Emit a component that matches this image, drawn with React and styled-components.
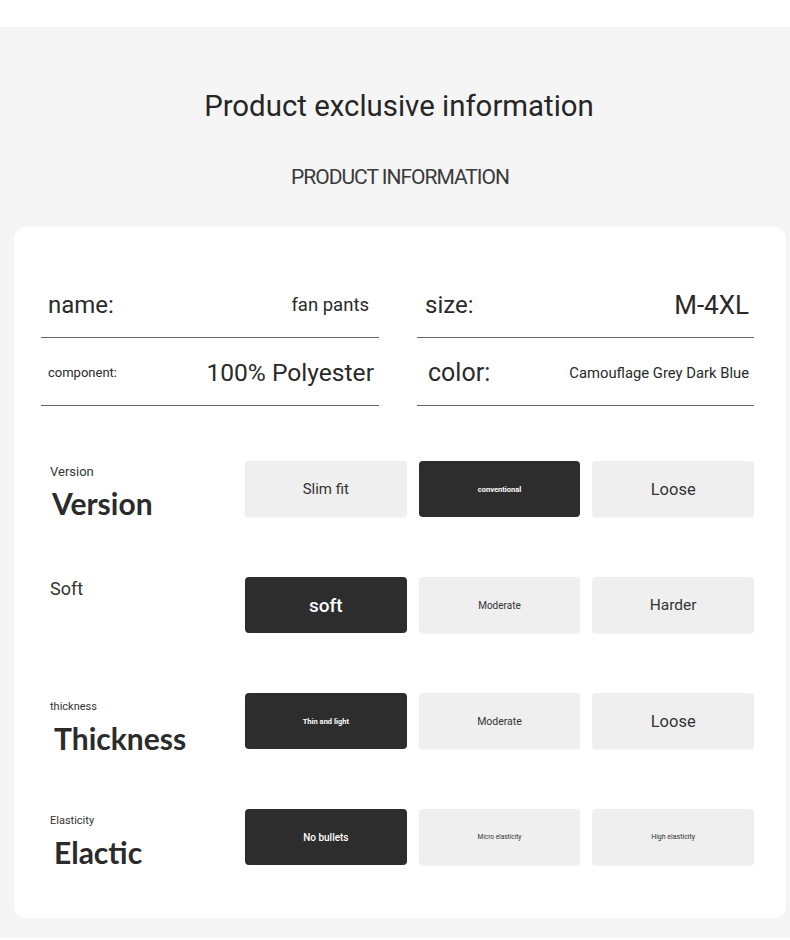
import React from 'react';
import styled, {createGlobalStyle} from 'styled-components';

const GlobalStyle = createGlobalStyle`
  body {
    margin: 0;
    background: #fff;
    font-family: Roboto, "Liberation Sans", sans-serif;
    color: #2b2b2b;
  }
`;

const Page = styled.div`
  margin-top: 27px;
  background: #f5f5f5;
  padding: 0 4px 20px 14px;
`;

const Header = styled.div`
  height: 200px;
  display: flex;
  flex-direction: column;
  align-items: center;
  padding-top: 62px;
  box-sizing: border-box;
`;

const Title = styled.h1`
  margin: 0;
  font-size: 29.4px;
  line-height: 34px;
  font-weight: 400;
  color: #262626;
  padding-right: 2px;
`;

const SubTitle = styled.h2`
  margin: 42px 0 0;
  font-size: 21px;
  line-height: 24px;
  font-weight: 400;
  letter-spacing: -1px;
  color: #3a3a3a;
`;

const Card = styled.div`
  background: #fff;
  border-radius: 12px;
  padding: 43px 32px 53px 27px;
`;

const InfoGrid = styled.div`
  display: grid;
  grid-template-columns: 338px 1fr;
  column-gap: 38px;
`;

const InfoRow = styled.div`
  height: 68px;
  display: flex;
  align-items: center;
  justify-content: space-between;
  padding: 2px ${props => props.right}px 0 ${props => props.left}px;
  border-bottom: 1.5px solid #666;
  box-sizing: border-box;
`;

const InfoKey = styled.span`
  font-size: ${props => props.size}px;
  color: #2a2a2a;
`;

const InfoValue = styled.span`
  font-size: ${props => props.size}px;
  color: #2a2a2a;
`;

const AttrGrid = styled.div`
  margin-top: 55px;
  display: grid;
  grid-template-columns: 192px repeat(3, 1fr);
  column-gap: 12px;
  row-gap: 60px;
  grid-auto-rows: 56px;
`;

const LabelCell = styled.div`
  padding: ${props => props.top}px 0 0 9px;
`;

const SmallLabel = styled.div`
  font-size: ${props => props.size}px;
  line-height: ${props => props.size + 3}px;
  color: #333;
`;

const BigLabel = styled.div`
  font-family: Lato, "Liberation Sans", sans-serif;
  font-weight: 700;
  font-size: 30px;
  line-height: 30px;
  margin-top: ${props => props.gap}px;
  margin-left: ${props => props.shift}px;
  color: #2b2b2b;
`;

const Option = styled.div`
  display: flex;
  align-items: center;
  justify-content: center;
  border-radius: 4px;
  background: ${props => (props.dark ? '#2d2d2d' : '#efefef')};
  color: ${props => (props.dark ? '#fff' : '#333')};
  font-size: ${props => props.size}px;
  font-weight: ${props => props.weight || 400};
  box-shadow: ${props => (props.dark ? 'none' : '0 1px 2px rgba(0,0,0,0.05)')};
`;

const info = [
  [
    {k: 'name:', ks: 24, v: 'fan pants', vs: 18.5, l: 7, r: 10},
    {k: 'size:', ks: 24, v: 'M-4XL', vs: 26, l: 8, r: 5}
  ],
  [
    {k: 'component:', ks: 13, v: '100% Polyester', vs: 24.6, l: 7, r: 5},
    {k: 'color:', ks: 25, v: 'Camouflage Grey Dark Blue', vs: 14.8, l: 11, r: 5}
  ]
];

const attrs = [
  {
    small: 'Version', smallSize: 13, big: 'Version', top: 3, gap: 8, shift: 2,
    options: [
      {text: 'Slim fit', size: 15},
      {text: 'conventional', size: 7.5, dark: true, weight: 700},
      {text: 'Loose', size: 16.5}
    ]
  },
  {
    small: 'Soft', smallSize: 18, top: 1,
    options: [
      {text: 'soft', size: 19, dark: true, weight: 500},
      {text: 'Moderate', size: 10},
      {text: 'Harder', size: 15.5}
    ]
  },
  {
    small: 'thickness', smallSize: 11, big: 'Thickness', top: 7, gap: 9, shift: 4,
    options: [
      {text: 'Thin and light', size: 7.5, dark: true, weight: 700},
      {text: 'Moderate', size: 10.5},
      {text: 'Loose', size: 16.5}
    ]
  },
  {
    small: 'Elasticity', smallSize: 11, big: 'Elactic', top: 5, gap: 9, shift: 4,
    options: [
      {text: 'No bullets', size: 10, dark: true, weight: 500},
      {text: 'Micro elasticity', size: 6.5},
      {text: 'High elasticity', size: 7}
    ]
  }
];

export default function App() {
  return (
    <>
      <GlobalStyle />
      <Page>
        <Header>
          <Title>Product exclusive information</Title>
          <SubTitle>PRODUCT INFORMATION</SubTitle>
        </Header>
        <Card>
          {info.map((row, i) => (
            <InfoGrid key={i}>
              {row.map(item => (
                <InfoRow key={item.k} left={item.l} right={item.r}>
                  <InfoKey size={item.ks}>{item.k}</InfoKey>
                  <InfoValue size={item.vs}>{item.v}</InfoValue>
                </InfoRow>
              ))}
            </InfoGrid>
          ))}
          <AttrGrid>
            {attrs.map(attr => (
              <React.Fragment key={attr.small}>
                <LabelCell top={attr.top}>
                  <SmallLabel size={attr.smallSize}>{attr.small}</SmallLabel>
                  {attr.big && (
                    <BigLabel gap={attr.gap} shift={attr.shift}>{attr.big}</BigLabel>
                  )}
                </LabelCell>
                {attr.options.map(opt => (
                  <Option
                    key={opt.text}
                    dark={opt.dark}
                    size={opt.size}
                    weight={opt.weight}
                  >
                    {opt.text}
                  </Option>
                ))}
              </React.Fragment>
            ))}
          </AttrGrid>
        </Card>
      </Page>
    </>
  );
}
